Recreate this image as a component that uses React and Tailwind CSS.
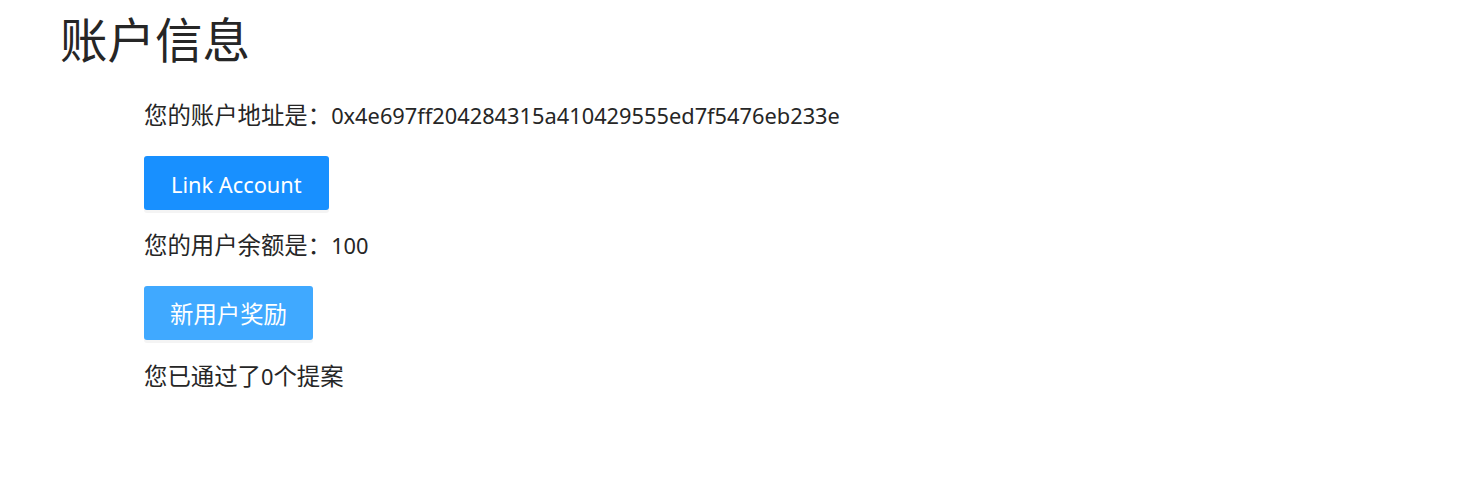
import React from 'react';

const font = { fontFamily: '"Noto Sans", "Noto Sans CJK SC", sans-serif' };

// CJK glyphs in the reference run a little wider than the Latin text
const Cjk = ({ children }) => <span className="text-[23.4px]">{children}</span>;

const ActionButton = ({ children, className }) => (
  <button
    className={`h-[54px] pt-[4px] rounded-[3px] text-white text-[21.8px] leading-none shadow-[0_3px_0_rgba(0,0,0,0.045)] ${className}`}
  >
    {children}
  </button>
);

export default function App() {
  const address = '0x4e697ff204284315a410429555ed7f5476eb233e';
  const balance = 100;
  const passed = 0;

  return (
    <div className="bg-white min-h-[480px] text-[#262626]" style={font}>
      <h1 className="pl-[60px] pt-[6px] text-[47.5px] leading-[68px] text-[#262626]">账户信息</h1>
      <div className="pl-[144px] pt-[24px] flex flex-col items-start text-[21.8px] leading-[34px]">
        <p><Cjk>您的账户地址是：</Cjk>{address}</p>
        <ActionButton className="mt-[23px] px-[27px] bg-[#1890ff]">Link Account</ActionButton>
        <p className="mt-[18px]"><Cjk>您的用户余额是：</Cjk>{balance}</p>
        <ActionButton className="mt-[23px] px-[26px] bg-[#40a9ff]"><Cjk>新用户奖励</Cjk></ActionButton>
        <p className="mt-[19px]"><Cjk>您已通过了</Cjk>{passed}<Cjk>个提案</Cjk></p>
      </div>
    </div>
  );
}
